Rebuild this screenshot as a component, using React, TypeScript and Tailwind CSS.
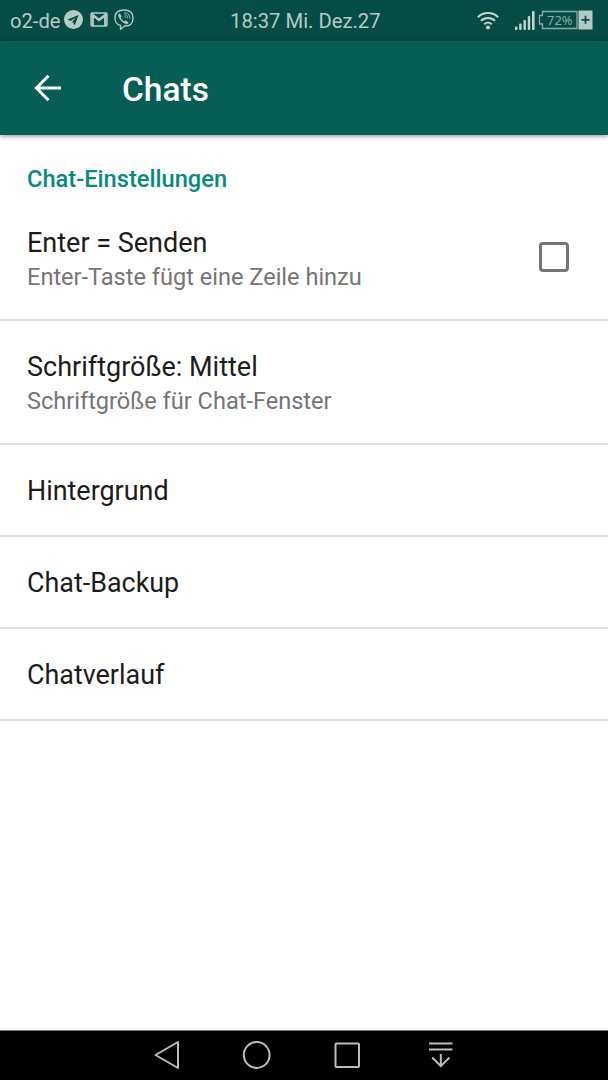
import React, { useState } from 'react';

const settings = [
    { title: 'Hintergrund' },
    { title: 'Chat-Backup' },
    { title: 'Chatverlauf' },
];

function StatusBar() {
    return (
        <div className="flex h-[41px] shrink-0 items-center bg-[#054d44] pb-px text-[20.5px] leading-none text-[#b4cac7]">
            <div className="flex w-[230px] items-center pl-[10px]">
                <span className="w-[54px] whitespace-nowrap pt-[2px] text-[20.200px]">o2-de</span>
                {/* Telegram */}
                <svg width="19" height="19" viewBox="0 0 19 19">
                    <circle cx="9.5" cy="9.5" r="9.5" fill="#b4cac7" />
                    <path d="M14.500 5 3.500 9.600l3.200 1.300L12 7.200l-3.700 4.500 2.600 3.500z" fill="#054d44" />
                </svg>
                {/* Gmail */}
                <svg className="ml-[7px]" width="18" height="15" viewBox="0 0 18 15">
                    <rect x="1" y="1" width="16" height="13" rx="1" fill="none" stroke="#b4cac7" strokeWidth="1.5" />
                    <path d="M2.700 14V3L9 8l6.300-5v11" fill="none" stroke="#b4cac7" strokeWidth="2.400" />
                </svg>
                {/* Viber */}
                <svg className="ml-[6px]" width="20" height="21" viewBox="0 0 20 21" fill="none" stroke="#b4cac7" strokeLinecap="round" strokeLinejoin="round">
                    <path d="M10 1c5.600 0 9 1.800 9 8s-2.900 8-8.300 8L6.500 20.300V16.500C2.600 15.500 1 13.200 1 9c0-6.200 3.400-8 9-8z" strokeWidth="1.400" />
                    <path d="M5.700 4.700 7.300 7.300 6.500 8.600c.7 1.900 1.900 3.200 3.800 4l1.500-.8 2.500 1.700-1.200 1.500C9.300 14.700 5 10.300 4.400 6.100z" fill="#b4cac7" strokeWidth=".5" />
                    <path d="M10.500 3.700c3.300 0 5.300 2 5.300 5.500M10.600 5.700c2 .1 3.100 1.300 3.100 3.200M10.800 7.500c.7.100 1 .5 1 1.200" strokeWidth=".8" />
                </svg>
            </div>
            <span className="w-[247px] whitespace-nowrap pt-[2px] text-[20.250px]">18:37 Mi. Dez.27</span>
            {/* WLAN */}
            <svg width="22" height="19" viewBox="0 0 22 19" fill="none" stroke="#c3d5d2" strokeWidth="2">
                <path d="M.8 6.200a14.500 14.500 0 0 1 20.400 0M4 9.900a10 10 0 0 1 14 0M7.200 13.300a5.600 5.600 0 0 1 7.600 0" />
                <circle cx="11" cy="16.500" r="1.900" fill="#c3d5d2" stroke="none" />
            </svg>
            {/* Signalstärke */}
            <svg className="ml-[16px]" width="20" height="19" viewBox="0 0 20 19" fill="#c3d5d2">
                <rect x="0" y="15.500" width="2.400" height="3.500" rx=".8" />
                <rect x="4.200" y="12.500" width="2.400" height="6.500" rx=".8" />
                <rect x="8.500" y="9" width="2.400" height="10" rx=".8" />
                <rect x="12.800" y="5" width="2.400" height="14" rx=".8" />
                <rect x="17" y="0" width="2.600" height="19" rx=".8" />
            </svg>
            {/* Akku */}
            <svg className="ml-[3px]" width="55" height="20" viewBox="0 0 55 20">
                <path d="M39 1.500H4.500v4H1.500v8.500h3v4.500H39z" fill="none" stroke="#88aaa5" strokeWidth="1.300" />
                <text x="9" y="14.500" fontSize="13" textLength="25.500" lengthAdjust="spacingAndGlyphs" fill="#88aaa5" className="font-['Noto_Sans',sans-serif]">72%</text>
                <rect x="40.500" y=".5" width="14" height="19" rx=".5" fill="#b4cac7" />
                <path d="M47.500 5.800v8M43.500 9.800h8" stroke="#054d44" strokeWidth="1.700" />
            </svg>
        </div>
    );
}

function AppBar() {
    return (
        <header className="z-10 flex h-[94px] shrink-0 items-center bg-[#075e54] pl-[34px] text-white shadow-[0_1px_5px_rgba(0,0,0,0.45)]">
            <svg width="28" height="28" viewBox="0 0 28 28" fill="none" stroke="currentColor" strokeWidth="3">
                <path d="M27 14H3M14.500 1.700 2.400 14l12.100 12.300" />
            </svg>
            <h1 className="pl-[60px] pt-[3px] text-[33.500px] font-medium leading-[40px]">Chats</h1>
        </header>
    );
}

function NavigationBar() {
    return (
        <nav className="flex h-[50px] shrink-0 items-center border-t border-[#777] bg-black pb-[2px] pl-[154px] text-[#bdbdbd]">
            <svg width="26" height="30" viewBox="0 0 26 30" fill="none" stroke="currentColor" strokeWidth="2" strokeLinejoin="round">
                <path d="M24 2v26L1.500 15z" />
            </svg>
            <svg className="ml-[62px]" width="30" height="30" viewBox="0 0 30 30" fill="none" stroke="currentColor" strokeWidth="2">
                <circle cx="14.700" cy="15" r="12.900" />
            </svg>
            <svg className="ml-[62px]" width="26" height="26" viewBox="0 0 26 26" fill="none" stroke="currentColor" strokeWidth="2">
                <rect x="1.500" y="1.500" width="23.500" height="23.500" rx="1" />
            </svg>
            <svg className="ml-[69px]" width="24" height="28" viewBox="0 0 24 28" fill="none" stroke="currentColor" strokeWidth="2">
                <path d="M0 2.500h23.500M0 8.500h23.500M11.800 13v12M3.200 16.500l8.600 8.600 8.600-8.600" />
            </svg>
        </nav>
    );
}

export default function App() {
    const [enterSends, setEnterSends] = useState(false);

    return (
        <div className="flex h-[1080px] w-[608px] flex-col overflow-hidden bg-white font-[Roboto,sans-serif] text-[27px] text-[#1c1c1c]">
            <StatusBar />
            <AppBar />

            <main className="flex-1">
                <h2 className="h-[62px] pl-[27px] pt-[27px] text-[23.650px] font-medium leading-[34px] text-[#068a7c]">Chat-Einstellungen</h2>

                <div className="flex h-[124px] items-center justify-between border-b-2 border-[#e2e2e2] pl-[27px] pr-[39px]">
                    <div className="pt-[4px] leading-[34px]">
                        <p>Enter = Senden</p>
                        <p className="text-[23.550px] text-[#757575]">Enter-Taste fügt eine Zeile hinzu</p>
                    </div>
                    <button
                        role="checkbox"
                        aria-checked={enterSends}
                        aria-label="Enter = Senden"
                        onClick={() => setEnterSends(!enterSends)}
                        className={`mb-[2px] h-[30px] w-[30px] rounded-[4px] border-[3px] border-[#757575] ${enterSends ? 'bg-[#068a7c]' : ''}`}
                    />
                </div>

                <div className="flex h-[124px] items-center border-b-2 border-[#e2e2e2] pl-[27px]">
                    <div className="pt-[4px] leading-[34px]">
                        <p>Schriftgröße: Mittel</p>
                        <p className="text-[23.550px] text-[#757575]">Schriftgröße für Chat-Fenster</p>
                    </div>
                </div>

                {settings.map((item) => (
                    <div key={item.title} className="flex h-[92px] items-center border-b-2 border-[#e2e2e2] pl-[27px] pt-[2px] text-[26.900px] leading-[34px]">
                        {item.title}
                    </div>
                ))}
            </main>

            <NavigationBar />
        </div>
    );
}
